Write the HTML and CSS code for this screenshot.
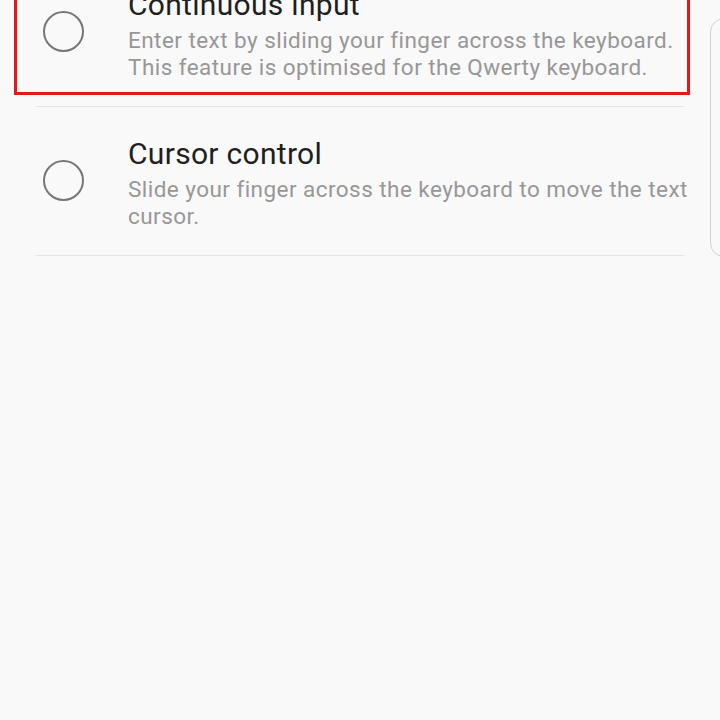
FILE: index.html
```html
<!DOCTYPE html>
<html lang="en">
<head>
    <meta charset="UTF-8">
    <meta name="viewport" content="width=device-width, initial-scale=1.0">
    <title>Keyboard swipe controls</title>
    <link rel="stylesheet" href="styles.css">
</head>
<body>
    <div class="screen">
        <ul class="option-list">
            <li class="option">
                <span class="radio"></span>
                <div class="option-text">
                    <div class="option-title">Continuous input</div>
                    <div class="option-desc">Enter text by sliding your finger across the keyboard. This feature is optimised for the Qwerty keyboard.</div>
                </div>
            </li>
            <li class="option">
                <span class="radio"></span>
                <div class="option-text">
                    <div class="option-title">Cursor control</div>
                    <div class="option-desc">Slide your finger across the keyboard to move the text cursor.</div>
                </div>
            </li>
        </ul>
        <!-- red highlight drawn over the first option -->
        <div class="highlight"></div>
        <!-- edge panel handle -->
        <div class="edge-handle"></div>
    </div>
</body>
</html>
```

FILE: styles.css
```css
body {
    margin: 0;
    background-color: #f9f9f9;
    font-family: Roboto, "Noto Sans", sans-serif;
}
.screen {
    position: relative;
    width: 720px;
    height: 720px;
    overflow: hidden;
}
.option-list {
    list-style: none;
    margin: -42px 0 0 0;
    padding: 0 36px;
}
.option {
    display: flex;
    align-items: flex-start;
    height: 148px;
    border-bottom: 1px solid #e3e3e3;
}
.radio {
    flex: none;
    box-sizing: border-box;
    width: 41px;
    height: 41px;
    margin: 53px 0 0 7px;
    border: 2.5px solid #767676;
    border-radius: 50%;
}
.option-text {
    flex: 1;
    margin: 0 -14px 0 44px;
    padding-top: 29px;
}
.option-title {
    font-size: 30px;
    line-height: 36px;
    letter-spacing: 0.3px;
    color: #1f1f1f;
}
.option-desc {
    margin-top: 4px;
    font-size: 22.5px;
    line-height: 27px;
    letter-spacing: 0.45px;
    color: #979797;
}
.highlight {
    position: absolute;
    left: 14px;
    top: -10px;
    width: 670px;
    height: 99px;
    border: 3px solid #e3171c;
}
.edge-handle {
    position: absolute;
    left: 710px;
    top: 18px;
    width: 40px;
    height: 237px;
    border: 1px solid #cfcfcf;
    border-radius: 14px;
}
```
